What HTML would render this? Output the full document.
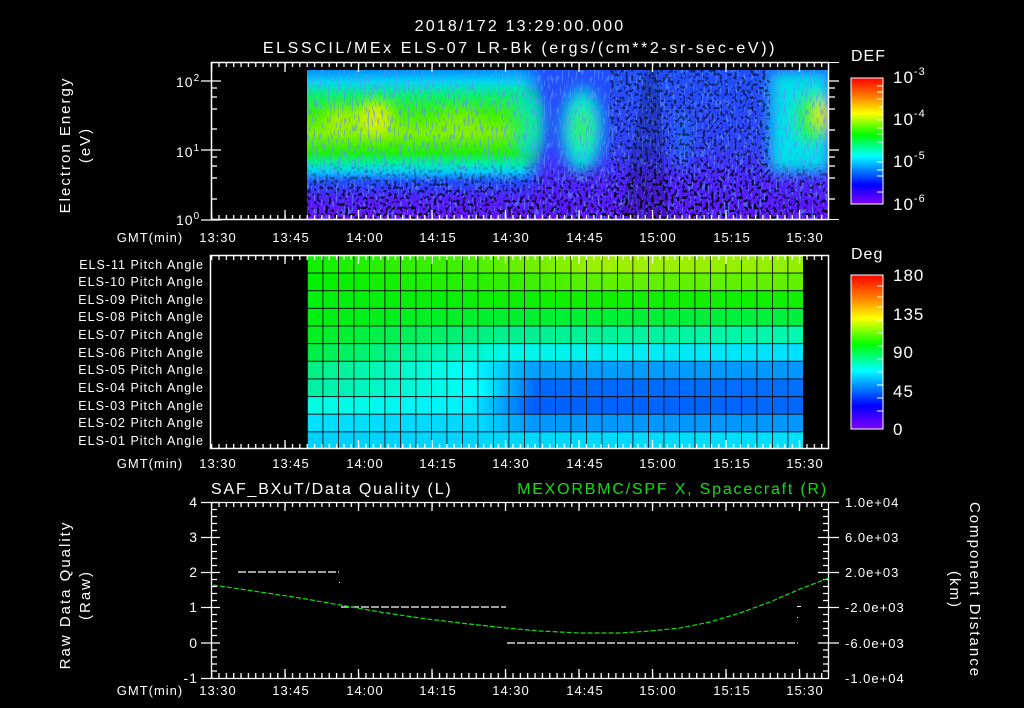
<!DOCTYPE html>
<html><head><meta charset="utf-8"><style>
html,body{margin:0;padding:0;background:#000;width:1024px;height:708px;overflow:hidden}
svg{display:block}
text{font-family:"Liberation Sans",sans-serif;fill:#fff;letter-spacing:1px}
</style></head><body>
<svg width="1024" height="708" viewBox="0 0 1024 708" xmlns="http://www.w3.org/2000/svg">
<defs>
<linearGradient id="rb" x1="0" y1="0" x2="0" y2="1">
<stop offset="0" stop-color="#ff0000"/><stop offset="0.15" stop-color="#ff8000"/><stop offset="0.28" stop-color="#ffff00"/><stop offset="0.45" stop-color="#00ff00"/><stop offset="0.62" stop-color="#00ffff"/><stop offset="0.85" stop-color="#0000ff"/><stop offset="1" stop-color="#8000ff"/>
</linearGradient>
<linearGradient id="bandL" x1="0" y1="70" x2="0" y2="220" gradientUnits="userSpaceOnUse">
<stop offset="0" stop-color="#0090ff"/><stop offset="0.08" stop-color="#00d8f0"/><stop offset="0.18" stop-color="#10f060"/><stop offset="0.3" stop-color="#40f000"/><stop offset="0.42" stop-color="#80f000"/><stop offset="0.55" stop-color="#20f000"/><stop offset="0.62" stop-color="#00f0a0"/><stop offset="0.68" stop-color="#00d0ff"/><stop offset="0.74" stop-color="#2050ff"/><stop offset="0.85" stop-color="#5020ff"/><stop offset="1" stop-color="#6a10ff"/>
</linearGradient>
<linearGradient id="bandM" x1="0" y1="70" x2="0" y2="220" gradientUnits="userSpaceOnUse">
<stop offset="0" stop-color="#2050ff"/><stop offset="0.5" stop-color="#3040ff"/><stop offset="0.7" stop-color="#4a28ff"/><stop offset="1" stop-color="#6010ff"/>
</linearGradient>
<linearGradient id="fadeL" x1="0" y1="0" x2="1" y2="0">
<stop offset="0" stop-color="#fff"/><stop offset="0.9" stop-color="#fff"/><stop offset="1" stop-color="#000"/>
</linearGradient>
<mask id="mL"><rect x="307" y="70" width="238" height="150" fill="url(#fadeL)"/></mask>
<filter id="bl"><feGaussianBlur stdDeviation="7"/></filter>
<filter id="spk" x="0" y="0" width="1" height="1">
<feTurbulence type="fractalNoise" baseFrequency="0.35 0.3" numOctaves="1" seed="4"/>
<feColorMatrix type="matrix" values="0 0 0 0 0  0 0 0 0 0  0 0 0 0 0  14 0 0 0 -7.6"/>
</filter>
<filter id="spk2" x="0" y="0" width="1" height="1">
<feTurbulence type="fractalNoise" baseFrequency="0.5 0.12" numOctaves="1" seed="9"/>
<feColorMatrix type="matrix" values="0 0 0 0 0.1  0 0 0 0 0.3  0 0 0 0 1  10 0 0 0 -5.6"/>
</filter>
<linearGradient id="spkMask" x1="0" y1="70" x2="0" y2="220" gradientUnits="userSpaceOnUse">
<stop offset="0" stop-color="#000"/><stop offset="0.6" stop-color="#000"/><stop offset="0.75" stop-color="#888"/><stop offset="1" stop-color="#fff"/>
</linearGradient>
<mask id="mS"><rect x="307" y="70" width="522" height="150" fill="url(#spkMask)"/><rect x="610" y="70" width="160" height="150" fill="#fff" opacity="0.55"/></mask>
<clipPath id="c1"><rect x="307" y="70" width="521" height="149"/></clipPath>
<pattern id="tickT" x="211" y="0" width="7.35" height="708" patternUnits="userSpaceOnUse"><rect x="0" y="0" width="1.3" height="708" fill="#fff"/></pattern>
</defs>

<text x="520" y="31" font-size="16" text-anchor="middle" style="letter-spacing:2.2px">2018/172 13:29:00.000</text>
<text x="520" y="53" font-size="16" text-anchor="middle" style="letter-spacing:2.6px">ELSSCIL/MEx ELS-07 LR-Bk  (ergs/(cm**2-sr-sec-eV))</text>

<g clip-path="url(#c1)">
<rect x="307" y="70" width="522" height="150" fill="url(#bandM)"/>
<rect x="307" y="70" width="238" height="150" fill="url(#bandL)" mask="url(#mL)"/>
<g filter="url(#bl)">
<ellipse cx="375" cy="118" rx="18" ry="17" fill="#d8f000"/>
<ellipse cx="340" cy="120" rx="14" ry="12" fill="#b0f000"/>
<ellipse cx="460" cy="122" rx="22" ry="12" fill="#90f000" opacity="0.7"/>
<ellipse cx="528" cy="125" rx="16" ry="35" fill="#00e0c0"/>
<ellipse cx="522" cy="125" rx="8" ry="18" fill="#20f040"/>
<ellipse cx="582" cy="130" rx="20" ry="42" fill="#00e8d0"/>
<ellipse cx="582" cy="128" rx="10" ry="20" fill="#30f060"/>
<ellipse cx="683" cy="140" rx="4" ry="30" fill="#00c0ff" opacity="0.6"/>
<rect x="770" y="72" width="60" height="100" fill="#00e0e8"/>
<ellipse cx="812" cy="118" rx="18" ry="26" fill="#20f040"/>
<ellipse cx="823" cy="115" rx="8" ry="13" fill="#f0f000"/>
</g>
<rect x="307" y="70" width="522" height="150" filter="url(#spk2)" opacity="0.6"/>
<rect x="307" y="70" width="522" height="150" filter="url(#spk)" mask="url(#mS)"/>
<path d="M645 70 L658 70 L668 220 L620 220 Z" fill="#000" opacity="0.2"/>
</g>
<rect x="211.5" y="62.5" width="617" height="157" fill="none" stroke="#fff" stroke-width="1.5"/>
<line x1="829" y1="62.5" x2="839" y2="62.5" stroke="#fff"/>
<line x1="829" y1="219.5" x2="839" y2="219.5" stroke="#fff"/>
<rect x="211" y="62" width="618" height="5" fill="url(#tickT)"/>
<rect x="211" y="215" width="618" height="5" fill="url(#tickT)"/>
<g stroke="#fff" stroke-width="1.3">
<line x1="211.5" y1="62" x2="211.5" y2="72"/><line x1="285" y1="62" x2="285" y2="72"/><line x1="358.5" y1="62" x2="358.5" y2="72"/><line x1="432" y1="62" x2="432" y2="72"/><line x1="505.5" y1="62" x2="505.5" y2="72"/><line x1="579" y1="62" x2="579" y2="72"/><line x1="652.5" y1="62" x2="652.5" y2="72"/><line x1="726" y1="62" x2="726" y2="72"/><line x1="799.5" y1="62" x2="799.5" y2="72"/>
<line x1="211.5" y1="210" x2="211.5" y2="220"/><line x1="285" y1="210" x2="285" y2="220"/><line x1="358.5" y1="210" x2="358.5" y2="220"/><line x1="432" y1="210" x2="432" y2="220"/><line x1="505.5" y1="210" x2="505.5" y2="220"/><line x1="579" y1="210" x2="579" y2="220"/><line x1="652.5" y1="210" x2="652.5" y2="220"/><line x1="726" y1="210" x2="726" y2="220"/><line x1="799.5" y1="210" x2="799.5" y2="220"/>
<line x1="201" y1="220" x2="221" y2="220"/><line x1="201" y1="150" x2="221" y2="150"/><line x1="201" y1="81" x2="221" y2="81"/>
<line x1="211" y1="199" x2="217" y2="199"/><line x1="211" y1="178" x2="217" y2="178"/><line x1="211" y1="166" x2="217" y2="166"/><line x1="211" y1="157" x2="217" y2="157"/>
<line x1="211" y1="129" x2="217" y2="129"/><line x1="211" y1="109" x2="217" y2="109"/><line x1="211" y1="97" x2="217" y2="97"/><line x1="211" y1="88" x2="217" y2="88"/>
<line x1="829" y1="81" x2="839" y2="81"/><line x1="829" y1="88" x2="835" y2="88"/><line x1="829" y1="97" x2="835" y2="97"/><line x1="829" y1="109" x2="835" y2="109"/><line x1="829" y1="130" x2="835" y2="130"/>
<line x1="829" y1="150" x2="839" y2="150"/><line x1="829" y1="157" x2="835" y2="157"/><line x1="829" y1="166" x2="835" y2="166"/><line x1="829" y1="178" x2="835" y2="178"/><line x1="829" y1="199" x2="835" y2="199"/>
</g>
<text x="176" y="87" font-size="14">10<tspan font-size="10" dy="-6">2</tspan></text>
<text x="176" y="157" font-size="14">10<tspan font-size="10" dy="-6">1</tspan></text>
<text x="176" y="225" font-size="14">10<tspan font-size="10" dy="-6">0</tspan></text>
<text transform="translate(70,145) rotate(-90)" font-size="15" text-anchor="middle" style="letter-spacing:2px">Electron Energy</text>
<text transform="translate(90,145) rotate(-90)" font-size="15" text-anchor="middle" style="letter-spacing:2px">(eV)</text>
<g font-size="13" text-anchor="middle">
<text x="150" y="242">GMT(min)</text><text x="218" y="242">13:30</text><text x="291" y="242">13:45</text><text x="365" y="242">14:00</text><text x="438" y="242">14:15</text><text x="511" y="242">14:30</text><text x="585" y="242">14:45</text><text x="658" y="242">15:00</text><text x="732" y="242">15:15</text><text x="805" y="242">15:30</text>
</g>
<text x="851" y="61" font-size="16">DEF</text>
<rect x="851" y="78" width="32" height="126" fill="url(#rb)" stroke="#fff" stroke-width="1"/>
<g stroke="#fff"><line x1="877" y1="86" x2="883" y2="86"/><line x1="877" y1="92" x2="883" y2="92"/><line x1="877" y1="99" x2="883" y2="99"/><line x1="879" y1="107" x2="883" y2="107"/><line x1="877" y1="120" x2="883" y2="120"/><line x1="877" y1="128" x2="883" y2="128"/><line x1="877" y1="134" x2="883" y2="134"/><line x1="877" y1="142" x2="883" y2="142"/><line x1="877" y1="162" x2="883" y2="162"/><line x1="877" y1="170" x2="883" y2="170"/><line x1="877" y1="176" x2="883" y2="176"/><line x1="877" y1="192" x2="883" y2="192"/></g>
<g font-size="17"><text x="893" y="83">10<tspan font-size="11" dy="-8">-3</tspan></text><text x="893" y="125">10<tspan font-size="11" dy="-8">-4</tspan></text><text x="893" y="167">10<tspan font-size="11" dy="-8">-5</tspan></text><text x="893" y="210">10<tspan font-size="11" dy="-8">-6</tspan></text></g>

<defs>
<linearGradient id="r11" x1="307" x2="803" y1="0" y2="0" gradientUnits="userSpaceOnUse"><stop offset="0" stop-color="#10f000"/><stop offset="0.3" stop-color="#40f000"/><stop offset="0.6" stop-color="#a0f000"/><stop offset="1" stop-color="#90f000"/></linearGradient>
<linearGradient id="r10" x1="307" x2="803" y1="0" y2="0" gradientUnits="userSpaceOnUse"><stop offset="0" stop-color="#00f000"/><stop offset="0.4" stop-color="#30f000"/><stop offset="0.6" stop-color="#60f000"/><stop offset="1" stop-color="#60f000"/></linearGradient>
<linearGradient id="r9" x1="307" x2="803" y1="0" y2="0" gradientUnits="userSpaceOnUse"><stop offset="0" stop-color="#00f010"/><stop offset="0.5" stop-color="#10f000"/><stop offset="1" stop-color="#10f000"/></linearGradient>
<linearGradient id="r8" x1="307" x2="803" y1="0" y2="0" gradientUnits="userSpaceOnUse"><stop offset="0" stop-color="#00f010"/><stop offset="0.4" stop-color="#00f030"/><stop offset="1" stop-color="#00f040"/></linearGradient>
<linearGradient id="r7" x1="307" x2="803" y1="0" y2="0" gradientUnits="userSpaceOnUse"><stop offset="0" stop-color="#00f020"/><stop offset="0.4" stop-color="#00f090"/><stop offset="1" stop-color="#00f8b0"/></linearGradient>
<linearGradient id="r6" x1="307" x2="803" y1="0" y2="0" gradientUnits="userSpaceOnUse"><stop offset="0" stop-color="#00f040"/><stop offset="0.4" stop-color="#00f8e8"/><stop offset="1" stop-color="#00e0ff"/></linearGradient>
<linearGradient id="r5" x1="307" x2="803" y1="0" y2="0" gradientUnits="userSpaceOnUse"><stop offset="0" stop-color="#00f080"/><stop offset="0.33" stop-color="#00ffff"/><stop offset="0.45" stop-color="#00a0ff"/><stop offset="1" stop-color="#0098ff"/></linearGradient>
<linearGradient id="r4" x1="307" x2="803" y1="0" y2="0" gradientUnits="userSpaceOnUse"><stop offset="0" stop-color="#00f0a0"/><stop offset="0.35" stop-color="#00ffff"/><stop offset="0.46" stop-color="#0068ff"/><stop offset="1" stop-color="#0070ff"/></linearGradient>
<linearGradient id="r3" x1="307" x2="803" y1="0" y2="0" gradientUnits="userSpaceOnUse"><stop offset="0" stop-color="#00ffe0"/><stop offset="0.33" stop-color="#00f0ff"/><stop offset="0.45" stop-color="#0060ff"/><stop offset="1" stop-color="#0068ff"/></linearGradient>
<linearGradient id="r2" x1="307" x2="803" y1="0" y2="0" gradientUnits="userSpaceOnUse"><stop offset="0" stop-color="#00e0ff"/><stop offset="0.35" stop-color="#00d8ff"/><stop offset="0.45" stop-color="#0098ff"/><stop offset="1" stop-color="#0098ff"/></linearGradient>
<linearGradient id="r1" x1="307" x2="803" y1="0" y2="0" gradientUnits="userSpaceOnUse"><stop offset="0" stop-color="#00d0ff"/><stop offset="1" stop-color="#00e0ff"/></linearGradient>
<pattern id="grid" x="307" y="255" width="15.5" height="17.64" patternUnits="userSpaceOnUse"><path d="M0 0V17.64M0 0H15.5" stroke="#000" stroke-width="1.6" fill="none"/></pattern>
</defs>
<rect x="307" y="255" width="496" height="17.6" fill="url(#r11)"/>
<rect x="307" y="272.6" width="496" height="17.7" fill="url(#r10)"/>
<rect x="307" y="290.3" width="496" height="17.6" fill="url(#r9)"/>
<rect x="307" y="307.9" width="496" height="17.7" fill="url(#r8)"/>
<rect x="307" y="325.6" width="496" height="17.6" fill="url(#r7)"/>
<rect x="307" y="343.2" width="496" height="17.7" fill="url(#r6)"/>
<rect x="307" y="360.9" width="496" height="17.6" fill="url(#r5)"/>
<rect x="307" y="378.5" width="496" height="17.7" fill="url(#r4)"/>
<rect x="307" y="396.2" width="496" height="17.6" fill="url(#r3)"/>
<rect x="307" y="413.8" width="496" height="17.7" fill="url(#r2)"/>
<rect x="307" y="431.5" width="496" height="17.5" fill="url(#r1)"/>
<rect x="307" y="255" width="497" height="194" fill="url(#grid)"/>
<rect x="211" y="255" width="618" height="5" fill="url(#tickT)"/>
<rect x="211" y="444" width="618" height="5" fill="url(#tickT)"/>
<g stroke="#fff" stroke-width="1.3">
<line x1="285" y1="255" x2="285" y2="264"/><line x1="358.5" y1="255" x2="358.5" y2="264"/><line x1="432" y1="255" x2="432" y2="264"/><line x1="505.5" y1="255" x2="505.5" y2="264"/><line x1="579" y1="255" x2="579" y2="264"/><line x1="652.5" y1="255" x2="652.5" y2="264"/><line x1="726" y1="255" x2="726" y2="264"/><line x1="799.5" y1="255" x2="799.5" y2="264"/>
<line x1="285" y1="440" x2="285" y2="449"/><line x1="358.5" y1="440" x2="358.5" y2="449"/><line x1="432" y1="440" x2="432" y2="449"/><line x1="505.5" y1="440" x2="505.5" y2="449"/><line x1="579" y1="440" x2="579" y2="449"/><line x1="652.5" y1="440" x2="652.5" y2="449"/><line x1="726" y1="440" x2="726" y2="449"/><line x1="799.5" y1="440" x2="799.5" y2="449"/>
</g>
<rect x="210.5" y="255.5" width="618" height="193" fill="none" stroke="#fff" stroke-width="1.5"/>
<g font-size="12.5" text-anchor="end" style="letter-spacing:1.3px">
<text x="204" y="269">ELS-11 Pitch Angle</text><text x="204" y="286">ELS-10 Pitch Angle</text><text x="204" y="304">ELS-09 Pitch Angle</text><text x="204" y="321">ELS-08 Pitch Angle</text><text x="204" y="339">ELS-07 Pitch Angle</text><text x="204" y="357">ELS-06 Pitch Angle</text><text x="204" y="374">ELS-05 Pitch Angle</text><text x="204" y="392">ELS-04 Pitch Angle</text><text x="204" y="410">ELS-03 Pitch Angle</text><text x="204" y="427">ELS-02 Pitch Angle</text><text x="204" y="445">ELS-01 Pitch Angle</text>
</g>
<g font-size="13" text-anchor="middle">
<text x="150" y="468">GMT(min)</text><text x="218" y="468">13:30</text><text x="291" y="468">13:45</text><text x="365" y="468">14:00</text><text x="438" y="468">14:15</text><text x="511" y="468">14:30</text><text x="585" y="468">14:45</text><text x="658" y="468">15:00</text><text x="732" y="468">15:15</text><text x="805" y="468">15:30</text>
</g>
<text x="851" y="259" font-size="16">Deg</text>
<rect x="851" y="275" width="32" height="154" fill="url(#rb)" stroke="#fff" stroke-width="1"/>
<g stroke="#fff"><line x1="877" y1="286" x2="883" y2="286"/><line x1="877" y1="297" x2="883" y2="297"/><line x1="877" y1="307" x2="883" y2="307"/><line x1="877" y1="320" x2="883" y2="320"/><line x1="877" y1="333" x2="883" y2="333"/><line x1="877" y1="346" x2="883" y2="346"/><line x1="877" y1="359" x2="883" y2="359"/><line x1="877" y1="372" x2="883" y2="372"/><line x1="877" y1="385" x2="883" y2="385"/><line x1="877" y1="398" x2="883" y2="398"/><line x1="877" y1="411" x2="883" y2="411"/></g>
<g font-size="17"><text x="893" y="281">180</text><text x="893" y="320">135</text><text x="893" y="358">90</text><text x="893" y="397">45</text><text x="893" y="435">0</text></g>

<text x="211" y="494" font-size="16" style="letter-spacing:1.8px">SAF_BXuT/Data Quality (L)</text>
<text x="828" y="494" font-size="16" text-anchor="end" style="fill:#10e010;letter-spacing:1.8px">MEXORBMC/SPF X, Spacecraft (R)</text>
<rect x="211" y="502" width="618" height="5" fill="url(#tickT)"/>
<rect x="211" y="673" width="618" height="5" fill="url(#tickT)"/>
<g stroke="#fff" stroke-width="1.3">
<line x1="285" y1="502" x2="285" y2="511"/><line x1="358.5" y1="502" x2="358.5" y2="511"/><line x1="432" y1="502" x2="432" y2="511"/><line x1="505.5" y1="502" x2="505.5" y2="511"/><line x1="579" y1="502" x2="579" y2="511"/><line x1="652.5" y1="502" x2="652.5" y2="511"/><line x1="726" y1="502" x2="726" y2="511"/><line x1="799.5" y1="502" x2="799.5" y2="511"/>
<line x1="285" y1="669" x2="285" y2="678"/><line x1="358.5" y1="669" x2="358.5" y2="678"/><line x1="432" y1="669" x2="432" y2="678"/><line x1="505.5" y1="669" x2="505.5" y2="678"/><line x1="579" y1="669" x2="579" y2="678"/><line x1="652.5" y1="669" x2="652.5" y2="678"/><line x1="726" y1="669" x2="726" y2="678"/><line x1="799.5" y1="669" x2="799.5" y2="678"/>
</g>
<g stroke="#fff" stroke-width="1.3" fill="none">
<path d="M211 502.5H829M211.5 502V678M201 678.5H829M828.5 502V678"/>
<path d="M201 502.5H220M201 537.5H220M201 572.5H220M201 607.5H220M201 643H220M818 502.5H839M818 537.5H839M818 572.5H839M818 607.5H839M818 643H839"/>
<path d="M211 509.5H217M211 516.5H217M211 523.5H217M211 530.5H217M211 544.5H217M211 551.5H217M211 558.5H217M211 565.5H217M211 579.5H217M211 586.5H217M211 593.5H217M211 600.5H217M211 614.5H217M211 621.5H217M211 628.5H217M211 635.5H217M211 650H217M211 657H217M211 664H217M211 671H217"/>
<path d="M823 509.5H829M823 516.5H829M823 523.5H829M823 530.5H829M823 544.5H829M823 551.5H829M823 558.5H829M823 565.5H829M823 579.5H829M823 586.5H829M823 593.5H829M823 600.5H829M823 614.5H829M823 621.5H829M823 628.5H829M823 635.5H829M823 650H829M823 657H829M823 664H829M823 671H829"/>
</g>
<g stroke="#fff" stroke-width="1.2" stroke-dasharray="8 2">
<line x1="238" y1="572" x2="339" y2="572"/>
<line x1="341" y1="607" x2="506" y2="607"/>
<line x1="507" y1="643" x2="798" y2="643"/>
</g>
<g fill="#fff"><rect x="339" y="582" width="1" height="1"/><rect x="797" y="606" width="4" height="1"/><rect x="797" y="617" width="1" height="1"/></g>
<path d="M213 585 L260 592 L300 598 L340 605 L380 612 L420 618 L460 623 L506 628 L540 631 L580 633 L620 633 L650 631 L680 628 L710 622 L740 613 L770 602 L800 589 L829 578" fill="none" stroke="#10e010" stroke-width="1.2" stroke-dasharray="5 2"/>
<g font-size="14" text-anchor="end"><text x="198" y="507">4</text><text x="198" y="542">3</text><text x="198" y="577">2</text><text x="198" y="612">1</text><text x="198" y="648">0</text><text x="198" y="683">-1</text></g>
<g font-size="13"><text x="845" y="507">1.0e+04</text><text x="845" y="542">6.0e+03</text><text x="845" y="577">2.0e+03</text><text x="845" y="612">-2.0e+03</text><text x="845" y="648">-6.0e+03</text><text x="845" y="683">-1.0e+04</text></g>
<text transform="translate(70,595) rotate(-90)" font-size="15" text-anchor="middle" style="letter-spacing:2px">Raw Data Quality</text>
<text transform="translate(90,595) rotate(-90)" font-size="15" text-anchor="middle" style="letter-spacing:2px">(Raw)</text>
<text transform="translate(970,590) rotate(90)" font-size="15" text-anchor="middle" style="letter-spacing:2px">Component Distance</text>
<text transform="translate(950,590) rotate(90)" font-size="15" text-anchor="middle" style="letter-spacing:2px">(km)</text>
<g font-size="13" text-anchor="middle">
<text x="150" y="695">GMT(min)</text><text x="218" y="695">13:30</text><text x="291" y="695">13:45</text><text x="365" y="695">14:00</text><text x="438" y="695">14:15</text><text x="511" y="695">14:30</text><text x="585" y="695">14:45</text><text x="658" y="695">15:00</text><text x="732" y="695">15:15</text><text x="805" y="695">15:30</text>
</g>
</svg>
</body></html>
